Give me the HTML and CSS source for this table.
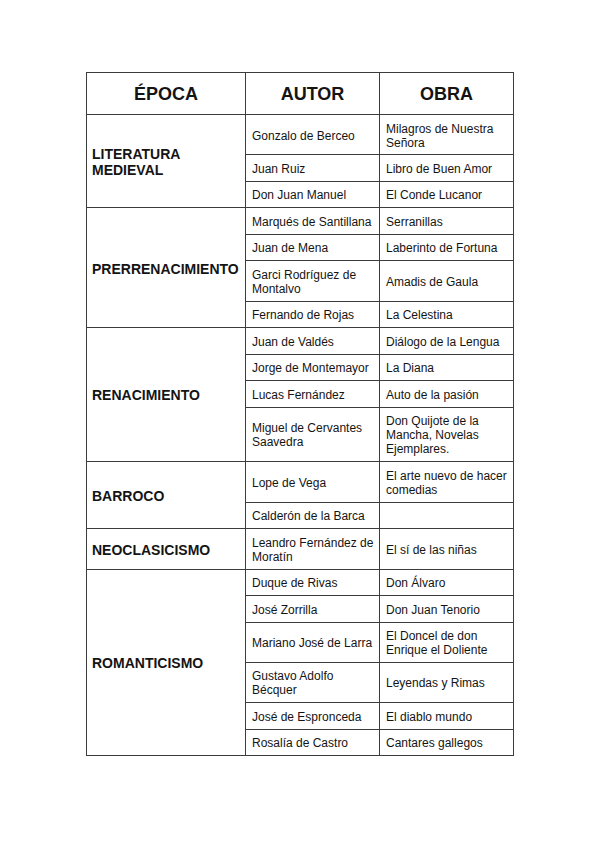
FILE: index.html
```html
<!DOCTYPE html>
<html lang="es">
<head>
<meta charset="utf-8">
<title>Épocas literarias</title>
<link rel="stylesheet" href="styles.css">
</head>
<body>
<div class="page">
<table class="lit">
<colgroup><col class="c1"><col class="c2"><col class="c3"></colgroup>
<thead>
<tr><th>ÉPOCA</th><th>AUTOR</th><th>OBRA</th></tr>
</thead>
<tbody>
<tr><td class="epoca" rowspan="3">LITERATURA<br>MEDIEVAL</td><td>Gonzalo de Berceo</td><td>Milagros de Nuestra<br>Señora</td></tr>
<tr><td>Juan Ruiz</td><td>Libro de Buen Amor</td></tr>
<tr><td>Don Juan Manuel</td><td>El Conde Lucanor</td></tr>

<tr><td class="epoca" rowspan="4">PRERRENACIMIENTO</td><td>Marqués de Santillana</td><td>Serranillas</td></tr>
<tr><td>Juan de Mena</td><td>Laberinto de Fortuna</td></tr>
<tr><td>Garci Rodríguez de<br>Montalvo</td><td>Amadis de Gaula</td></tr>
<tr><td>Fernando de Rojas</td><td>La Celestina</td></tr>

<tr><td class="epoca" rowspan="4">RENACIMIENTO</td><td>Juan de Valdés</td><td>Diálogo de la Lengua</td></tr>
<tr><td>Jorge de Montemayor</td><td>La Diana</td></tr>
<tr><td>Lucas Fernández</td><td>Auto de la pasión</td></tr>
<tr><td>Miguel de Cervantes<br>Saavedra</td><td>Don Quijote de la<br>Mancha, Novelas<br>Ejemplares.</td></tr>

<tr><td class="epoca" rowspan="2">BARROCO</td><td>Lope de Vega</td><td>El arte nuevo de hacer<br>comedias</td></tr>
<tr><td>Calderón de la Barca</td><td></td></tr>

<tr><td class="epoca">NEOCLASICISMO</td><td>Leandro Fernández de<br>Moratín</td><td>El sí de las niñas</td></tr>

<tr><td class="epoca" rowspan="6">ROMANTICISMO</td><td>Duque de Rivas</td><td>Don Álvaro</td></tr>
<tr><td>José Zorrilla</td><td>Don Juan Tenorio</td></tr>
<tr><td>Mariano José de Larra</td><td>El Doncel de don<br>Enrique el Doliente</td></tr>
<tr><td>Gustavo Adolfo<br>Bécquer</td><td>Leyendas y Rimas</td></tr>
<tr><td>José de Espronceda</td><td>El diablo mundo</td></tr>
<tr><td>Rosalía de Castro</td><td>Cantares gallegos</td></tr>
</tbody>
</table>
</div>
</body>
</html>
```

FILE: styles.css
```css
html, body {
  margin: 0;
  padding: 0;
  background: #ffffff;
}

.page {
  padding: 72px 0 0 86px;
}

.lit {
  border-collapse: collapse;
  width: 427px;
  table-layout: fixed;
  font-family: "Liberation Sans", Arial, sans-serif;
  color: #141414;
}

.c1 { width: 159px; }
.c2 { width: 134px; }
.c3 { width: 134px; }

.lit th,
.lit td {
  border: 1px solid #3c3c3c;
  vertical-align: middle;
  text-align: left;
}

.lit th {
  font-size: 18px;
  font-weight: bold;
  line-height: 21px;
  text-align: center;
  padding: 11px 4px 9px 4px;
  height: 21px;
}

.lit td {
  font-size: 12px;
  line-height: 14px;
  padding: 6.5px 4px 4.97px 6px;
}

.lit td.epoca {
  font-size: 14px;
  font-weight: bold;
  line-height: 16px;
  padding-left: 5px;
}
```
